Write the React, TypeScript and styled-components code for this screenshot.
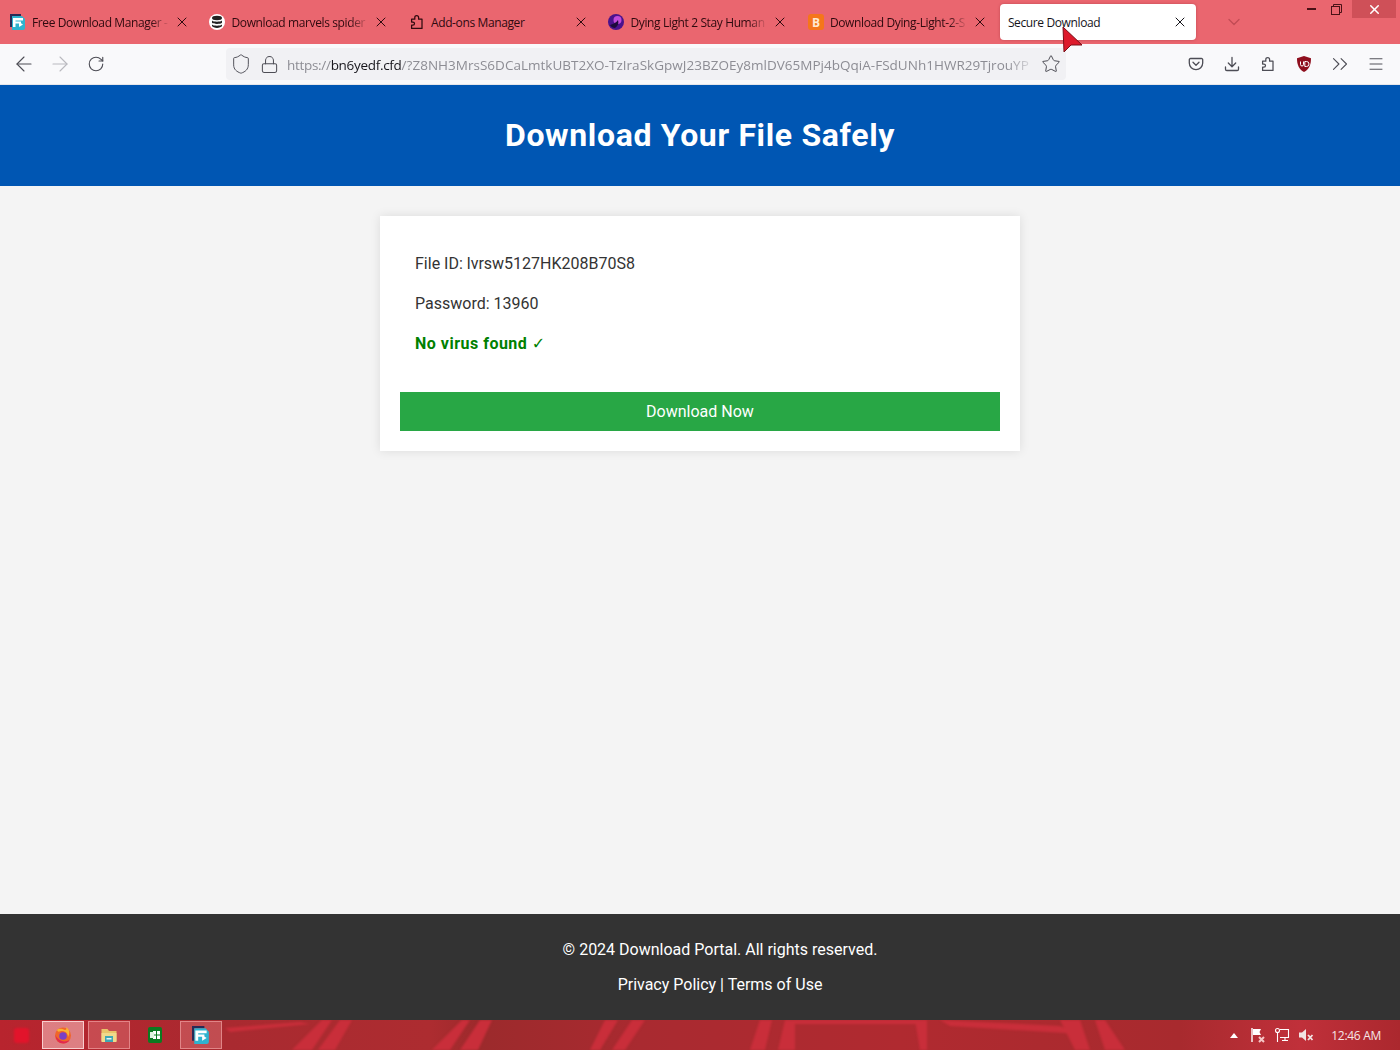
import React from "react";
import styled, { createGlobalStyle } from "styled-components";
import { ArrowLeft, ArrowRight, RotateCw, Shield, Lock, Star, ChevronsRight, Menu, X, ChevronDown } from "lucide-react";

const Global = createGlobalStyle`
  html, body { margin: 0; padding: 0; height: 100%; overflow: hidden; background: #f4f4f4; }
  * { box-sizing: border-box; }
`;

const Desktop = styled.div`
  position: relative;
  width: 1400px;
  height: 1050px;
  display: flex;
  flex-direction: column;
  overflow: hidden;
  font-family: "Roboto", "Liberation Sans", sans-serif;
`;

/* ---------- browser tab strip ---------- */
const TabStrip = styled.div`
  height: 44px;
  flex: none;
  background: #ea666f;
  display: flex;
  align-items: flex-start;
  padding-top: 4px;
  font-family: "Open Sans", "Liberation Sans", sans-serif;
`;
const Tab = styled.div<{ $active?: boolean }>`
  width: ${(p) => (p.$active ? 196 : 195.6)}px;
  height: 36px;
  margin-right: 3.9px;
  margin-left: ${(p) => (p.$active ? 2.5 : 0)}px;
  flex: none;
  display: flex;
  align-items: center;
  padding: 0 ${(p) => (p.$active ? 10 : 7.6)}px 0 ${(p) => (p.$active ? 8 : 10)}px;
  gap: 6px;
  border-radius: 4px;
  font-size: 12px;
  letter-spacing: -0.38px;
  color: ${(p) => (p.$active ? "#15141a" : "#2f0a0f")};
  background: ${(p) => (p.$active ? "#fff" : "transparent")};
  box-shadow: ${(p) => (p.$active ? "0 0 3px rgba(120,20,30,.35)" : "none")};
`;
const FaviconSlot = styled.span`
  width: 16px;
  height: 16px;
  flex: none;
  display: flex;
  align-items: center;
  justify-content: center;
`;
const TabTitle = styled.span<{ $fade?: boolean }>`
  flex: 1;
  min-width: 0;
  white-space: nowrap;
  overflow: hidden;
  ${(p) =>
    p.$fade
      ? `-webkit-mask-image: linear-gradient(to right, #000 86%, transparent 100%); mask-image: linear-gradient(to right, #000 86%, transparent 100%);`
      : ""}
`;
const TabClose = styled.span`
  width: 12px;
  flex: none;
  display: flex;
  align-items: center;
  justify-content: center;
  color: inherit;
  svg { flex: none; }
`;
const BloggerMark = styled.span`
  width: 16px;
  height: 16px;
  border-radius: 3px;
  background: #f5761a;
  color: #ffe9cf;
  font: 700 12px "Open Sans", sans-serif;
  display: flex;
  align-items: center;
  justify-content: center;
`;
const TabListButton = styled.div`
  width: 36px;
  height: 36px;
  margin-left: 16px;
  display: flex;
  align-items: center;
  justify-content: center;
  color: #c24c55;
`;
const WindowControls = styled.div`
  margin: -4px 4px 0 auto;
  display: flex;
  align-items: flex-start;
  color: #4a1116;
`;
const WindowButton = styled.div<{ $close?: boolean }>`
  width: ${(p) => (p.$close ? 44 : 25)}px;
  height: 18px;
  margin-left: ${(p) => (p.$close ? 3 : 0)}px;
  display: flex;
  align-items: center;
  justify-content: center;
  background: ${(p) => (p.$close ? "#cf5058" : "transparent")};
  color: ${(p) => (p.$close ? "#fff" : "#4a1116")};
`;

/* ---------- browser toolbar ---------- */
const Toolbar = styled.div`
  height: 41px;
  flex: none;
  background: #f9f9fb;
  border-bottom: 1px solid #e6e6ea;
  display: flex;
  align-items: center;
  padding: 0 6px;
`;
const ToolButton = styled.div<{ $dim?: boolean }>`
  width: 36px;
  height: 32px;
  flex: none;
  display: flex;
  align-items: center;
  justify-content: center;
  color: ${(p) => (p.$dim ? "#b9b9bf" : "#4d4d55")};
`;
const UrlBar = styled.div`
  width: 840px;
  height: 32px;
  margin-left: 112px;
  flex: none;
  background: #f1f1f4;
  border-radius: 4px;
  display: flex;
  align-items: center;
  padding: 0 7px;
  color: #4d4d55;
`;
const UrlIcon = styled.span`
  width: 16px;
  height: 16px;
  flex: none;
  margin-right: 12px;
  display: flex;
  align-items: center;
  justify-content: center;
  svg { flex: none; }
  &:nth-child(2) { margin-right: 10px; }
  &:last-child { margin-right: 0; }
`;
const UrlText = styled.div`
  flex: 1;
  min-width: 0;
  margin-right: 6px;
  padding-top: 1px;
  white-space: nowrap;
  overflow: hidden;
  font: 13.5px "Open Sans", "Liberation Sans", sans-serif;
  letter-spacing: 0.02px;
  color: #8d8d94;
  -webkit-mask-image: linear-gradient(to right, #000 96%, transparent 100%);
  mask-image: linear-gradient(to right, #000 96%, transparent 100%);
`;
const UrlScheme = styled.span`
  letter-spacing: -0.3px;
`;
const UrlHost = styled.span`
  color: #17161c;
  letter-spacing: -0.3px;
`;
const ToolbarEnd = styled.div`
  margin-left: auto;
  display: flex;
`;

/* ---------- page ---------- */
const Header = styled.header`
  height: 101px;
  flex: none;
  background: #0056b3;
  color: #fff;
  display: flex;
  align-items: center;
  justify-content: center;
  padding-bottom: 2px;
`;
const Title = styled.h1`
  margin: 0;
  font-size: 32px;
  font-weight: 700;
  letter-spacing: 0.65px;
`;
const Main = styled.main`
  flex: 1;
  background: #f4f4f4;
  padding-top: 30px;
`;
const Card = styled.section`
  width: 640px;
  height: 235px;
  margin: 0 auto;
  padding: 20px;
  background: #fff;
  box-shadow: 0 0 10px rgba(0, 0, 0, 0.1);
`;
const Details = styled.div`
  padding: 18px 15px 0;
  height: 156px;
`;
const Line = styled.p<{ $ok?: boolean }>`
  margin: 0 0 21px;
  height: 19px;
  line-height: 19px;
  font-size: 16px;
  font-weight: ${(p) => (p.$ok ? 700 : 400)};
  letter-spacing: ${(p) => (p.$ok ? 0.5 : 0)}px;
  color: ${(p) => (p.$ok ? "#008000" : "#333")};
`;
const CheckMark = styled.span`
  font-family: "DejaVu Sans", sans-serif;
  letter-spacing: 0;
`;
const DownloadButton = styled.button`
  display: block;
  width: 600px;
  height: 39px;
  border: 0;
  padding: 0;
  background: #28a745;
  color: #fff;
  font: 16px "Roboto", sans-serif;
`;
const Footer = styled.footer`
  height: 106px;
  flex: none;
  background: #333;
  color: #fff;
  padding: 26px 0 0 40px;
  text-align: center;
  font-size: 16px;
`;
const FooterLine = styled.div`
  height: 19px;
  line-height: 19px;
  margin-bottom: 16px;
`;

/* ---------- taskbar ---------- */
const Taskbar = styled.div`
  position: relative;
  height: 30px;
  flex: none;
  background: linear-gradient(
    to right,
    #b8242e 0,
    #a92a30 230px,
    #ad2c30 430px,
    #9c2a2c 480px,
    #a92a30 640px,
    #b02a30 900px,
    #a82a2e 1180px,
    #c0303a 1300px,
    #ab282e 1400px
  );
  display: flex;
  align-items: center;
  overflow: hidden;
`;
const Wallpaper = styled.svg`
  position: absolute;
  inset: 0;
  filter: blur(1.2px);
`;
const StartSlot = styled.div`
  position: relative;
  width: 42px;
  height: 28px;
  flex: none;
  display: flex;
  align-items: center;
  justify-content: center;
`;
const StartBlob = styled.span`
  width: 15px;
  height: 15px;
  border-radius: 3px;
  background: #e2142b;
  filter: blur(1px);
`;
const TaskButton = styled.div<{ $state: "active" | "open" | "idle" }>`
  position: relative;
  width: 42px;
  height: 28px;
  flex: none;
  margin-right: 4px;
  display: flex;
  align-items: center;
  justify-content: center;
  border: 1px solid
    ${(p) => (p.$state === "active" ? "rgba(255,225,225,.8)" : p.$state === "open" ? "rgba(255,190,190,.5)" : "transparent")};
  background: ${(p) =>
    p.$state === "active" ? "rgba(255,200,200,.55)" : p.$state === "open" ? "rgba(255,170,170,.28)" : "transparent"};
`;
const Tray = styled.div`
  position: relative;
  margin-left: auto;
  padding-right: 19px;
  display: flex;
  align-items: center;
  color: #fff;
`;
const TrayIcon = styled.span`
  width: 18px;
  height: 18px;
  margin-right: 6px;
  display: flex;
  align-items: center;
  justify-content: center;
`;
const Clock = styled.span`
  margin-left: 10px;
  font: 12px "Open Sans", "Liberation Sans", sans-serif;
  letter-spacing: -0.3px;
  color: #f6e6e6;
`;
const PointerOverlay = styled.svg`
  position: absolute;
  left: 1058px;
  top: 24px;
`;

/* ---------- drawn icons ---------- */
const FdmIcon = ({ size = 16 }: { size?: number }) => (
  <svg width={size} height={size} viewBox="0 0 16 16">
    <path d="M0 0h11v2H2v11H0z" fill="#2a2a55" />
    <path d="M2 2h10l3 3v9a2 2 0 0 1-2 2H2z" fill="#2fb3cf" />
    <path d="M3 4h10v2.400H5.500v1.200H11v2H5.500V13H3z" fill="#fff" />
    <path d="M9 8l4 2.600L9 13z" fill="#fff" />
  </svg>
);
const StackIcon = () => (
  <svg width="16" height="16" viewBox="0 0 16 16">
    <circle cx="8" cy="8" r="8" fill="#fff" />
    <ellipse cx="8" cy="4" rx="5" ry="2.200" fill="#222" />
    <path d="M3 6.500c1 1.600 9 1.600 10 0v2.200c-1 1.600-9 1.600-10 0z" fill="#222" />
    <path d="M3 10.500c1 1.600 9 1.600 10 0v1.600c-1 2.400-9 2.400-10 0z" fill="#222" />
  </svg>
);
const PuzzleIcon = ({ color = "#2f0a0f", size = 16 }: { color?: string; size?: number }) => (
  <svg width={size} height={size} viewBox="0 0 16 16" fill="none" stroke={color} strokeWidth="1.250" strokeLinejoin="round">
    <path d="M2.600 5.200h3.200V3.400a1.900 1.900 0 0 1 3.800 0v1.800h3.400v9.200H2.600v-3.200h1.300a1.600 1.600 0 0 0 0-3.200H2.600z" />
  </svg>
);
const DyingLightIcon = () => (
  <svg width="16" height="16" viewBox="0 0 16 16">
    <circle cx="8" cy="8" r="8" fill="#4a128c" />
    <circle cx="9.500" cy="6" r="4" fill="#c04ad8" />
    <path d="M2 11c3-1 6-2 8-5 1 3 0 6-3 8-2 0-4-1-5-3z" fill="#1c0b3a" />
  </svg>
);
const PocketIcon = () => (
  <svg width="16" height="16" viewBox="0 0 16 16" fill="none" stroke="#4d4d55" strokeWidth="1.300" strokeLinecap="round" strokeLinejoin="round">
    <path d="M2.500 2.500h11A1.200 1.200 0 0 1 14.700 3.700V7A6.700 6.700 0 0 1 1.300 7V3.700A1.200 1.200 0 0 1 2.500 2.500z" />
    <path d="M5 6.300L8 9.200l3-2.900" />
  </svg>
);
const DownloadIcon = () => (
  <svg width="16" height="16" viewBox="0 0 16 16" fill="none" stroke="#4d4d55" strokeWidth="1.300" strokeLinecap="round" strokeLinejoin="round">
    <path d="M8 1.500v9M4.300 7L8 10.700 11.700 7" />
    <path d="M1.500 11v2.200c0 .7.600 1.300 1.300 1.300h10.400c.7 0 1.300-.6 1.300-1.300V11" />
  </svg>
);
const UBlockIcon = () => (
  <svg width="16" height="16" viewBox="0 0 16 16">
    <path d="M8 0l7 2.200c0 6.800-2 11-7 13.800C3 13.200 1 9 1 2.200z" fill="#8f0f1e" />
    <path d="M4.500 5.500v3a1.500 1.500 0 0 0 3 0v-3M8.800 5.500h1.700a2 2 0 0 1 0 5H8.800z" fill="none" stroke="#fff" strokeWidth="1" />
  </svg>
);
const RestoreIcon = () => (
  <svg width="11" height="11" viewBox="0 0 11 11" fill="none" stroke="currentColor" strokeWidth="1">
    <rect x=".5" y="2.500" width="8" height="8" />
    <path d="M2.500 2.500v-2h8v8h-2" />
  </svg>
);
const MinimizeIcon = () => (
  <svg width="10" height="4" viewBox="0 0 10 4">
    <rect y="1" width="9" height="2" fill="currentColor" />
  </svg>
);
const FirefoxIcon = () => (
  <svg width="18" height="18" viewBox="0 0 18 18">
    <circle cx="9" cy="9.500" r="8" fill="#f0652a" />
    <path d="M3 4c1 3 3 1 5 1 3 0 6 2 6 6 2-3 2-8-2-10 1 2 0 3-1 3-3-1-6-2-8 0z" fill="#f9b233" />
    <circle cx="9" cy="10" r="3.800" fill="#7a3fc4" />
    <path d="M1.500 9c0 5 3.500 8.500 8 8.500 2.500 0 5-1.500 6-3.500-3 2-8 2-11-1-1-1-2.500-2-3-4z" fill="#e22850" />
  </svg>
);
const FolderIcon = () => (
  <svg width="18" height="18" viewBox="0 0 18 18">
    <path d="M1.500 3h6l1.500 2h7.500v10h-15z" fill="#e9c46a" />
    <rect x="1.500" y="7" width="15" height="9" fill="#f1d98b" />
    <rect x="5" y="10" width="8" height="6" fill="#3fa7b5" />
    <rect x="6.500" y="12" width="5" height="1.500" fill="#e8f4f4" />
  </svg>
);
const SheetIcon = () => (
  <svg width="16" height="18" viewBox="0 0 16 18">
    <rect x="1" y="1" width="14" height="16" rx="2" fill="#0b7a20" />
    <rect x="6" y="5" width="7" height="8" fill="#fff" />
    <path d="M9.500 5v8M6 9h7" stroke="#0b7a20" strokeWidth="1" />
    <rect x="3" y="6" width="4" height="6" fill="#dff3e0" />
  </svg>
);
const TrayFlag = () => (
  <svg width="16" height="16" viewBox="0 0 16 16">
    <path d="M2 1v14" stroke="#fff" strokeWidth="1.400" />
    <path d="M3 2h8l-1.500 3L11 8H3z" fill="#fff" />
    <path d="M9 10l5 5M14 10l-5 5" stroke="#f6c6c6" strokeWidth="2" />
  </svg>
);
const TrayNetwork = () => (
  <svg width="16" height="16" viewBox="0 0 16 16" fill="none" stroke="#fff" strokeWidth="1.100">
    <circle cx="3.500" cy="3.500" r="2" />
    <path d="M3.500 5.500V15M6 2.500h8.500v8H6M8 13.500h6M11 10.500v3" />
  </svg>
);
const TraySound = () => (
  <svg width="16" height="16" viewBox="0 0 16 16">
    <path d="M1 5.500h3L8 2v12L4 10.500H1z" fill="#f1e3e3" />
    <path d="M10 8l4.500 5M14.500 8L10 13" stroke="#f1e3e3" strokeWidth="1.800" />
  </svg>
);
const TrayArrow = () => (
  <svg width="8" height="5" viewBox="0 0 8 5">
    <path d="M4 0l4 5H0z" fill="#fff" />
  </svg>
);

const URL_REST =
  "/?Z8NH3MrsS6DCaLmtkUBT2XO-TzIraSkGpwJ23BZOEy8mlDV65MPj4bQqiA-FSdUNh1HWR29TjrouYP";

const tabs: { title: string; icon: React.ReactNode; fade?: boolean }[] = [
  { title: "Free Download Manager -", icon: <FdmIcon />, fade: true },
  { title: "Download marvels spider", icon: <StackIcon />, fade: true },
  { title: "Add-ons Manager", icon: <PuzzleIcon /> },
  { title: "Dying Light 2 Stay Human", icon: <DyingLightIcon />, fade: true },
  { title: "Download Dying-Light-2-S", icon: <BloggerMark>B</BloggerMark>, fade: true },
];

const bands: string[] = [
  "292,30 312,30 332,0 322,0",
  "318,30 335,30 352,0 340,0",
  "432,30 450,30 470,0 462,0",
  "460,30 478,30 492,0 480,0",
  "590,30 600,30 618,0 605,0",
  "612,30 625,30 645,0 632,0",
  "750,30 765,30 772,0 760,0",
  "778,30 795,30 795,0 785,0",
  "795,0 920,0 920,4 795,4",
  "915,0 927,0 927,30 920,30",
  "940,0 1060,6 1080,14 950,6",
  "1060,0 1080,0 1090,30 1075,30",
  "1095,0 1105,0 1125,30 1105,30",
  "225,8 300,2 310,4 230,12",
];

export default function App() {
  return (
    <Desktop>
      <Global />
      <TabStrip>
        {tabs.map((t) => (
          <Tab key={t.title}>
            <FaviconSlot>{t.icon}</FaviconSlot>
            <TabTitle $fade={t.fade}>{t.title}</TabTitle>
            <TabClose>
              <X size={16} strokeWidth={1.5} />
            </TabClose>
          </Tab>
        ))}
        <Tab $active>
          <TabTitle>Secure Download</TabTitle>
          <TabClose>
            <X size={16} strokeWidth={1.5} />
          </TabClose>
        </Tab>
        <TabListButton>
          <ChevronDown size={20} strokeWidth={1.6} />
        </TabListButton>
        <WindowControls>
          <WindowButton><MinimizeIcon /></WindowButton>
          <WindowButton><RestoreIcon /></WindowButton>
          <WindowButton $close><X size={15} strokeWidth={2.4} /></WindowButton>
        </WindowControls>
      </TabStrip>

      <Toolbar>
        <ToolButton><ArrowLeft size={24} strokeWidth={1.1} /></ToolButton>
        <ToolButton $dim><ArrowRight size={24} strokeWidth={1.1} /></ToolButton>
        <ToolButton><RotateCw size={18} strokeWidth={1.5} /></ToolButton>
        <UrlBar>
          <UrlIcon><Shield size={22} strokeWidth={1.05} /></UrlIcon>
          <UrlIcon><Lock size={19} strokeWidth={1.3} /></UrlIcon>
          <UrlText>
            <UrlScheme>https://</UrlScheme><UrlHost>bn6yedf.cfd</UrlHost>{URL_REST}
          </UrlText>
          <UrlIcon><Star size={20} strokeWidth={1.2} /></UrlIcon>
        </UrlBar>
        <ToolbarEnd>
          <ToolButton><PocketIcon /></ToolButton>
          <ToolButton><DownloadIcon /></ToolButton>
          <ToolButton><PuzzleIcon color="#4d4d55" /></ToolButton>
          <ToolButton><UBlockIcon /></ToolButton>
          <ToolButton><ChevronsRight size={26} strokeWidth={1} /></ToolButton>
          <ToolButton><Menu size={18} strokeWidth={1.3} /></ToolButton>
        </ToolbarEnd>
      </Toolbar>

      <Header>
        <Title>Download Your File Safely</Title>
      </Header>

      <Main>
        <Card>
          <Details>
            <Line>File ID: lvrsw5127HK208B70S8</Line>
            <Line>Password: 13960</Line>
            <Line $ok>No virus found <CheckMark>✓</CheckMark></Line>
          </Details>
          <DownloadButton>Download Now</DownloadButton>
        </Card>
      </Main>

      <Footer>
        <FooterLine>© 2024 Download Portal. All rights reserved.</FooterLine>
        <FooterLine>Privacy Policy | Terms of Use</FooterLine>
      </Footer>

      <Taskbar>
        <Wallpaper width="1400" height="30" viewBox="0 0 1400 30">
          {bands.map((b) => (
            <polygon key={b} points={b} fill="#c92e3a" />
          ))}
        </Wallpaper>
        <StartSlot><StartBlob /></StartSlot>
        <TaskButton $state="active"><FirefoxIcon /></TaskButton>
        <TaskButton $state="open"><FolderIcon /></TaskButton>
        <TaskButton $state="idle"><SheetIcon /></TaskButton>
        <TaskButton $state="open"><FdmIcon size={18} /></TaskButton>
        <Tray>
          <TrayIcon><TrayArrow /></TrayIcon>
          <TrayIcon><TrayFlag /></TrayIcon>
          <TrayIcon><TrayNetwork /></TrayIcon>
          <TrayIcon><TraySound /></TrayIcon>
          <Clock>12:46 AM</Clock>
        </Tray>
      </Taskbar>

      <PointerOverlay width="30" height="32" viewBox="0 0 30 32">
        <path d="M5 3l1 25 7-7h11z" fill="#dd1a2b" stroke="#7a0f18" strokeWidth="1" />
      </PointerOverlay>
    </Desktop>
  );
}
